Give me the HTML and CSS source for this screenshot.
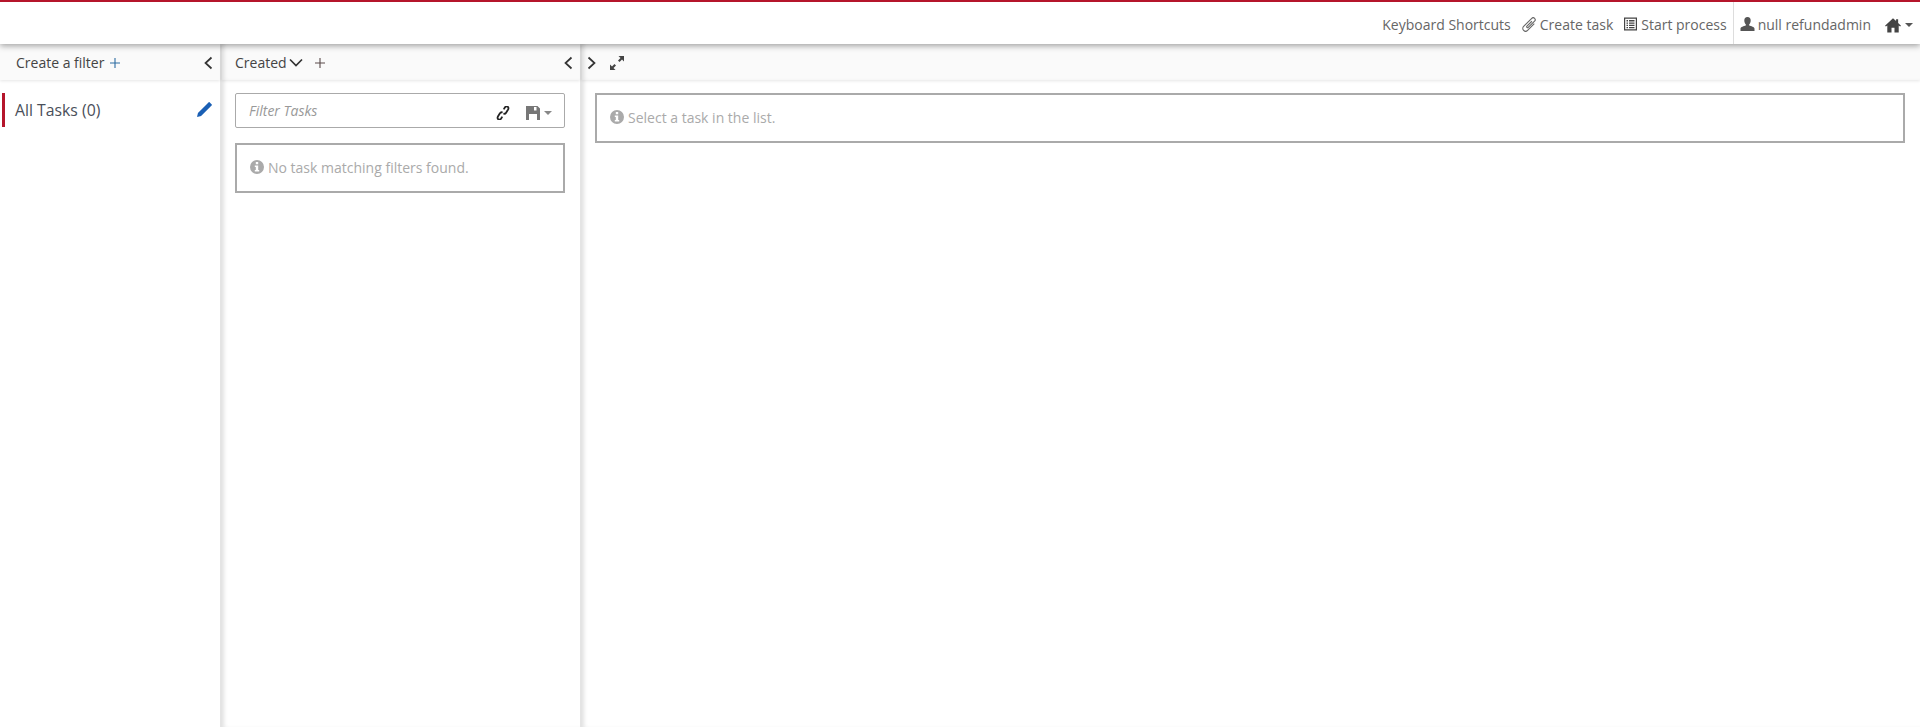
FILE: index.html
```html
<!DOCTYPE html>
<html lang="en">
<head>
<meta charset="utf-8">
<title>Tasklist</title>
<link rel="stylesheet" href="styles.css">
</head>
<body>
<header class="topbar">
  <nav class="topnav">
    <a class="navitem">Keyboard Shortcuts</a>
    <a class="navitem"><svg class="ic ic-clip" viewBox="2.500 2.500 15 15"><g transform="rotate(45 10 10)"><path d="M12.800 6v9.500a2.800 2.800 0 0 1-5.600 0V4a2 2 0 0 1 4 0v9a.9.9 0 0 1-1.800 0V6" fill="none" stroke="currentColor" stroke-width="1.100"/></g></svg>Create task</a>
    <a class="navitem"><svg class="ic ic-list" viewBox="0 0 13 14"><path fill-rule="evenodd" d="M0 .5h13v13H0zM1.200 1.700v10.600h10.600V1.700zM2.500 3h1.500v1.400H2.500zm2.500 0h5.500v1.400H5zM2.500 5.400h1.500v1.400H2.500zm2.500 0h5.500v1.400H5zM2.500 7.700h1.500v1.400H2.500zm2.500 0h5.500v1.400H5zM2.500 10h1.500v1.200H2.500zm2.500 0h5.500v1.200H5z" fill="currentColor"/></svg>Start process</a>
    <span class="navsep"></span>
    <a class="navitem navuser"><svg class="ic ic-user" viewBox="0 0 14 14"><path d="M7 0c2.200 0 3.200 1.400 3.200 3.400 0 1.700-.7 3.100-1.500 3.900v1.300c1.900.6 5.300 1.400 5.300 3.100V14H0v-2.300c0-1.700 3.400-2.500 5.300-3.100V7.300C4.500 6.500 3.800 5.100 3.800 3.400 3.800 1.400 4.800 0 7 0z" fill="currentColor"/></svg>null refundadmin</a>
    <a class="navitem navhome"><svg class="ic ic-home" viewBox="0 0 14 14"><path d="M7 1 0 7.600l.8.800L2 7.400V13.500h3.700V9.300h2.600v4.200H12V7.400l1.200 1 .8-.8L11.500 5.200V2h-1.800v1.500z" fill="currentColor"/></svg><span class="caret"></span></a>
  </nav>
</header>
<main class="board">
  <section class="col col-filters">
    <div class="toolbar">
      <span class="tool-text">Create a filter</span>
      <svg class="plus plus-blue" viewBox="0 0 10 10"><path d="M5 0v10M0 5h10" stroke="currentColor" stroke-width="1.100" fill="none"/></svg>
      <svg class="chev chev-end" viewBox="0 0 10 14"><path d="M8.500 1.500 2.500 7l6 5.500" fill="none" stroke="currentColor" stroke-width="1.700"/></svg>
    </div>
    <div class="filter-row">
      <span class="filter-name">All Tasks (0)</span>
      <svg class="pencil" viewBox="0 0 14 14"><path d="M0 14l.9-3.800L9.800 1.300l2.900 2.900-8.900 8.900zM10.600.5l.9-.5 2.500 2.500-.5.900-.9.900-2.900-2.900z" fill="currentColor"/></svg>
    </div>
  </section>
  <section class="col col-list">
    <div class="toolbar">
      <span class="tool-text">Created</span>
      <svg class="drop" viewBox="0 0 14 10"><path d="M1 1.500l6 6 6-6" fill="none" stroke="currentColor" stroke-width="1.700"/></svg>
      <svg class="plus plus-dark" viewBox="0 0 10 10"><path d="M5 0v10M0 5h10" stroke="currentColor" stroke-width="1.100" fill="none"/></svg>
      <svg class="chev chev-end" viewBox="0 0 10 14"><path d="M8.500 1.500 2.500 7l6 5.500" fill="none" stroke="currentColor" stroke-width="1.700"/></svg>
    </div>
    <div class="col-body">
      <div class="search">
        <span class="search-ph">Filter Tasks</span>
        <svg class="link" viewBox="0 0 14 14"><g transform="rotate(-8 7 7)"><path d="M8.200 3.500 9.600 1.800c.9-1 2.200-1 2.900-.4.800.6.800 1.900 0 2.900L10.100 7.100c-.8 1-2 1-2.800.5M5.800 10.500 4.400 12.200c-.9 1-2.200 1-2.900.4-.8-.6-.8-1.900 0-2.900L3.900 6.900c.8-1 2-1 2.800-.5" fill="none" stroke="currentColor" stroke-width="1.800"/></g></svg>
        <svg class="save" viewBox="0 0 14 14"><path fill-rule="evenodd" d="M0 0h11.500L14 2.500V14H0zM8 1v3.500h2.500V1zM3 8v6h8V8z" fill="currentColor"/></svg>
        <span class="caret caret-light"></span>
      </div>
      <div class="notice">
        <svg class="info" viewBox="0 0 14 14"><path fill-rule="evenodd" d="M7 0a7 7 0 1 1 0 14A7 7 0 0 1 7 0zM5.800 2v2.300h2.400V2zM4.800 5.500v1.400h1v3.200h-1v1.400h4.400v-1.400h-1V5.500z" fill="currentColor"/></svg>No task matching filters found.
      </div>
    </div>
  </section>
  <section class="col col-detail">
    <div class="toolbar">
      <svg class="chev" viewBox="0 0 10 14"><path d="M1.500 1.500 7.500 7l-6 5.500" fill="none" stroke="currentColor" stroke-width="1.700"/></svg>
      <svg class="expand" viewBox="0 0 14 14"><path d="M8.500 0H14v5.500l-2-2L9.500 6 8 4.500l2.500-2.500zM5.500 14H0V8.500l2 2L4.500 8 6 9.500 3.500 12z" fill="currentColor"/></svg>
    </div>
    <div class="col-body detail-body">
      <div class="notice">
        <svg class="info" viewBox="0 0 14 14"><path fill-rule="evenodd" d="M7 0a7 7 0 1 1 0 14A7 7 0 0 1 7 0zM5.800 2v2.300h2.400V2zM4.800 5.500v1.400h1v3.200h-1v1.400h4.400v-1.400h-1V5.500z" fill="currentColor"/></svg>Select a task in the list.
      </div>
    </div>
  </section>
</main>
</body>
</html>
```
FILE: styles.css
```css
* { box-sizing: border-box; }
html, body { height: 100%; }
body {
  margin: 0;
  overflow: hidden;
  display: flex;
  flex-direction: column;
  background: #fff;
  color: #444;
  font: 14px/20px "Open Sans", sans-serif;
}
.topbar {
  flex: none;
  position: relative;
  z-index: 3;
  height: 44px;
  border-top: 2px solid #b5152b;
  background: #fff;
  box-shadow: 0 2px 6px rgba(0, 0, 0, .35);
}
.topnav {
  display: flex;
  justify-content: flex-end;
  align-items: center;
  height: 42px;
  padding: 3px 7px 0 0;
  color: #666;
}
.navitem { display: flex; align-items: center; margin-right: 11px; white-space: nowrap; }
.navitem:nth-child(3) { margin-right: 6px; }
.navsep { width: 1px; height: 42px; margin-top: -3px; background: #ddd; margin-right: 6px; }
.navuser { margin-right: 14px; }
.navhome { margin-right: 0; }
.ic { width: 14px; height: 14px; margin-right: 3px; color: #555; }
.ic-clip { width: 15px; height: 15px; margin-right: 3px; color: #666; }
.ic-list { width: 13px; margin-right: 4px; margin-top: -1px; color: #444; }
.ic-user { width: 15px; margin-top: -1px; margin-right: 3px; }
.ic-home { width: 16px; height: 16px; margin-right: 4px; color: #444; }
.caret { width: 0; height: 0; border: 4px solid transparent; border-top-color: #555; border-bottom: 0; }
.caret-light { border-top-color: #888; margin-left: 4px; margin-top: 4px; }
.board { flex: 1; display: flex; min-height: 0; gap: 2px; background: #e4e4e4; }
.col { background: #fff; display: flex; flex-direction: column; }
.col-filters { width: 220px; }
.col-list { width: 358px; box-shadow: inset 4px 0 4px -2px rgba(0, 0, 0, .12); }
.col-detail { flex: 1; box-shadow: inset 4px 0 4px -2px rgba(0, 0, 0, .12); }
.toolbar {
  flex: none;
  display: flex;
  align-items: center;
  height: 36px;
  padding: 2px 7px 0 16px;
  background: #fafafa;
  box-shadow: 0 1px 3px rgba(0, 0, 0, .1);
  color: #444;
}
.col-list .toolbar { padding-left: 13px; box-shadow: 0 1px 3px rgba(0, 0, 0, .1), inset 4px 0 4px -2px rgba(0, 0, 0, .12); }
.col-detail .toolbar { padding-left: 5px; box-shadow: 0 1px 3px rgba(0, 0, 0, .1), inset 4px 0 4px -2px rgba(0, 0, 0, .12); }
.tool-text { white-space: nowrap; }
.plus { width: 10px; height: 10px; }
.plus-blue { margin-left: 6px; color: #2d6ca2; }
.plus-dark { margin-left: 12px; color: #5a4a4a; }
.chev { width: 10px; height: 14px; color: #333; }
.chev-end { margin-left: auto; }
.drop { width: 14px; height: 10px; margin-left: 2px; color: #333; }
.expand { width: 14px; height: 14px; margin-left: 13px; color: #444; }
.filter-row {
  display: flex;
  align-items: center;
  justify-content: space-between;
  height: 34px;
  margin: 13px 8px 0 2px;
  padding-left: 10px;
  border-left: 3px solid #b5152b;
}
.filter-name { font-size: 15.800px; color: #4a4f5a; }
.pencil { width: 15px; height: 15px; margin-top: -1px; color: #1a5fb4; }
.col-body { padding: 13px 15px 0 13px; }
.detail-body { padding-left: 13px; padding-right: 15px; }
.search {
  display: flex;
  align-items: center;
  height: 35px;
  padding: 0 12px 0 13px;
  border: 1px solid #aaa;
  border-radius: 2px;
  margin-bottom: 15px;
}
.search-ph { flex: 1; font-style: italic; color: #999; }
.link { width: 14px; height: 14px; margin-top: 4px; color: #222; }
.save { width: 14px; height: 14px; margin-left: 16px; margin-top: 4px; color: #777; }
.notice {
  display: flex;
  align-items: center;
  height: 50px;
  padding: 0 13px;
  border: 2px solid #aaa;
  color: #aaa;
}
.info { width: 14px; height: 14px; margin-right: 4px; margin-top: -2px; color: #aaa; }
```
